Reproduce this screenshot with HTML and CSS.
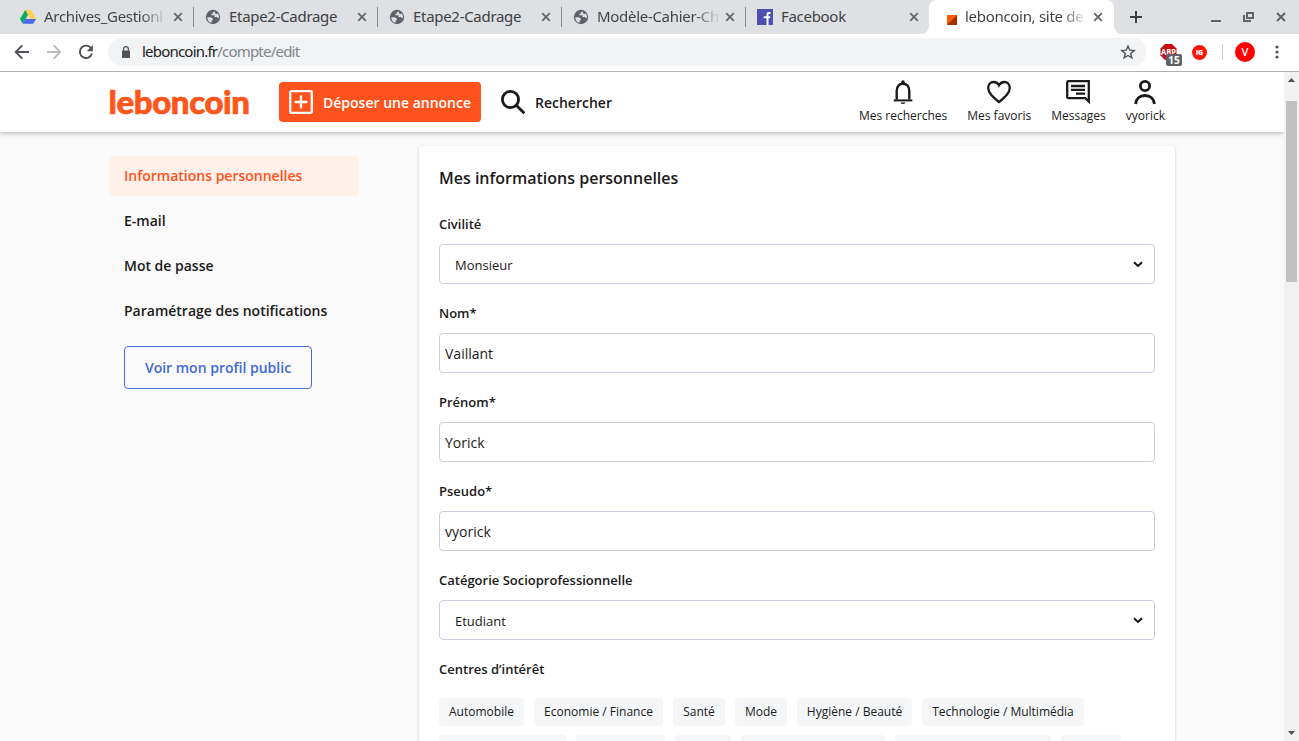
FILE: index.html
```html
<!DOCTYPE html>
<html lang="fr">
<head>
<meta charset="utf-8">
<title>leboncoin, site de petites annonces</title>
<link rel="stylesheet" href="styles.css">
</head>
<body>
<svg width="0" height="0" class="defs">
  <symbol id="close" viewBox="0 0 10 10"><path d="M1.200 1.200l7.600 7.600M8.800 1.200L1.200 8.800" stroke="#5f6368" stroke-width="1.700" fill="none"/></symbol>
  <symbol id="globe" viewBox="0 0 16 16"><circle cx="8" cy="8" r="7.200" fill="#5f6368"/><path d="M2.300 8.200H6l2 1.700v1.300H6.600v2.600C4 13.300 2.200 11 2.300 8.200zM9.200 2.300L8 3.300V4.500H6.500V6.200H9.500V8H12l1.600 1.700L14 7.300 12.800 4.300 11.300 5.200 10.200 4.300z" fill="#dee0e4"/></symbol>
  <symbol id="chevron" viewBox="0 0 10 7"><path d="M1 1.200l4 3.700 4-3.700" fill="none" stroke="#111" stroke-width="2"/></symbol>
</svg>
<div class="tabstrip">
  <div class="tab"><svg class="favicon" viewBox="0 0 16 16"><path d="M5.200 1h5.600L5.600 10 2.800 14.700 0 10z" fill="#11a861"/><path d="M5.200 1h5.600L16 10H10.400z" fill="#ffd04b"/><path d="M5.400 10H16l-2.800 4.700H2.700z" fill="#4a67f0"/></svg><span class="title fade">Archives_Gestionl</span><svg class="x"><use href="#close"/></svg></div>
  <div class="tab inner"><svg class="favicon"><use href="#globe"/></svg><span class="title">Etape2-Cadrage</span><svg class="x"><use href="#close"/></svg></div>
  <div class="tab inner"><svg class="favicon"><use href="#globe"/></svg><span class="title">Etape2-Cadrage</span><svg class="x"><use href="#close"/></svg></div>
  <div class="tab inner"><svg class="favicon"><use href="#globe"/></svg><span class="title fade">Modèle-Cahier-Ch</span><svg class="x"><use href="#close"/></svg></div>
  <div class="tab inner last"><svg class="favicon" viewBox="0 0 16 16"><path d="M0 0h16v16H0z" fill="#4b4fb0"/><path d="M13.500 3.900h-1.700q-1.300 0-1.300 1.300v10.800M6.700 8.300h6.500" stroke="#fff" stroke-width="2" fill="none"/></svg><span class="title">Facebook</span><svg class="x"><use href="#close"/></svg></div>
  <div class="tab active"><svg class="favicon" viewBox="0 0 16 16"><path d="M6 6h10v10H6z" fill="#ff5a0a"/><path d="M16 6v10H6z" fill="#a83000"/></svg><span class="title fade">leboncoin, site de</span><svg class="x"><use href="#close"/></svg></div>
  <div class="newtab"><svg width="12" height="12" viewBox="0 0 12 12"><path d="M6 0v12M0 6h12" stroke="#3c4043" stroke-width="2"/></svg></div>
  <div class="wincontrols">
    <svg width="10" height="10" viewBox="0 0 10 10"><path d="M0 9h10" stroke="#5f6368" stroke-width="2"/></svg>
    <svg width="11" height="10" viewBox="0 0 11 10"><path d="M4 1h6v5H4zM1 3v6h7" stroke="#5f6368" stroke-width="2" fill="none"/></svg>
    <svg width="10" height="10" viewBox="0 0 10 10"><path d="M1 1l8 8M9 1L1 9" stroke="#5f6368" stroke-width="2"/></svg>
  </div>
</div>
<div class="toolbar">
  <svg class="nav" viewBox="0 0 16 16"><path d="M15 8H2M8.300 1.300L1.700 8l6.600 6.700" stroke="#505357" stroke-width="1.900" fill="none"/></svg>
  <svg class="nav" viewBox="0 0 16 16"><path d="M1 8h13M7.700 1.300L14.300 8l-6.600 6.700" stroke="#babcbe" stroke-width="1.900" fill="none"/></svg>
  <svg class="nav" viewBox="0 0 16 16"><path d="M13.300 4.500A6.200 6.200 0 1 0 14 9.500" stroke="#505357" stroke-width="1.900" fill="none"/><path d="M14.900 1v6.200H8.700z" fill="#505357"/></svg>
  <div class="omnibox">
    <svg class="lock" viewBox="0 0 10 12"><path d="M1.500 4.500h7q.5 0 .5 1V11q0 1-.5 1h-7q-.5 0-.5-1V5.500q0-1 .5-1z" fill="#505357"/><path d="M2.700 5V3a2.300 2.300 0 0 1 4.600 0v2" stroke="#505357" stroke-width="1.300" fill="none"/></svg>
    <span class="url"><span class="host">leboncoin.fr</span><span>/compte/edit</span></span>
    <svg class="star" viewBox="0 0 16 16"><path d="M8 2l1.700 4.200 4.500.3-3.500 2.900 1.100 4.400L8 11.500l-3.800 2.300 1.100-4.400L1.800 6.500l4.500-.3z" fill="none" stroke="#505357" stroke-width="1.400"/></svg>
  </div>
  <div class="abp"><svg width="18" height="16" viewBox="0 0 18 16"><path d="M5 0h7l4.500 4.500v7L12 16H5L.5 11.500v-7z" fill="#c70d12"/><text x="1" y="10.500" textLength="15" lengthAdjust="spacingAndGlyphs">ABP</text></svg><span class="count">15</span></div>
  <span class="ig">IG</span>
  <span class="divider"></span>
  <span class="avatar">V</span>
  <svg class="dots" viewBox="0 0 4 14"><g fill="#505357"><circle cx="2" cy="2" r="1.600"/><circle cx="2" cy="7" r="1.600"/><circle cx="2" cy="12" r="1.600"/></g></svg>
</div>
<div class="viewport">
  <div class="page">
    <header class="header">
      <svg class="logo" width="140" height="40" viewBox="0 0 140 40"><text x="-.5" y="32" textLength="141.500">leboncoin</text></svg>
      <a class="post"><svg width="24" height="24" viewBox="0 0 24 24" fill="none" stroke="#fff" stroke-width="2.300"><rect x="1.200" y="1.200" width="21.600" height="21.600" rx="1"/><path d="M12 6.500v11M6.500 12h11" stroke-linecap="round"/></svg><span>Déposer une annonce</span></a>
      <a class="search"><svg width="24" height="24" viewBox="0 0 24 24" fill="none" stroke="#1a1a1a" stroke-width="2.800"><circle cx="9.500" cy="9.500" r="8.100"/><path d="M15.300 15.300l8 8"/></svg><span>Rechercher</span></a>
      <nav class="menu">
        <a><svg viewBox="0 0 24 24" fill="none" stroke="#1a1a1a" stroke-width="2.400"><path d="M5.700 19.500V11c0-4.600 2.600-7.200 6.300-7.200s6.300 2.600 6.300 7.200v8.500"/><path d="M2.700 20.400h18.600" stroke-width="2"/><path d="M10.200 3.500V2q0-1.800 1.800-1.800T13.800 2v1.500zM9.500 22.400h5q-.6 1.600-2.500 1.600t-2.500-1.600z" fill="#1a1a1a" stroke="none"/></svg><span>Mes recherches</span></a>
        <a><svg viewBox="0 0 24 24" fill="none" stroke="#1a1a1a" stroke-width="2.300"><path d="M12 22C6 17 1.200 13 1.200 8c0-4 2.500-6 5.500-6C9 2 11 3.300 12 5.300 13 3.300 15 2 17.300 2 20.300 2 22.800 4 22.800 8c0 5-4.800 9-10.800 14z"/></svg><span>Mes favoris</span></a>
        <a><svg viewBox="0 0 24 24" fill="none" stroke="#1a1a1a" stroke-width="2.300"><path d="M22.800 1.200V21.500l-3.500-3.300H2.500Q1.200 18.200 1.200 17V2.500Q1.200 1.200 2.500 1.200h20z"/><path d="M5 6h14M5 9.800h14M10 13.600h9"/></svg><span>Messages</span></a>
        <a><svg viewBox="0 0 24 24" fill="none" stroke="#1a1a1a" stroke-width="2.800"><circle cx="12" cy="6" r="4.600"/><path d="M2.600 24c.5-5.200 4-8.500 9.400-8.500s8.900 3.300 9.400 8.500"/></svg><span>vyorick</span></a>
      </nav>
    </header>
    <main class="content">
      <aside class="side">
        <a class="current">Informations personnelles</a>
        <a>E-mail</a>
        <a>Mot de passe</a>
        <a>Paramétrage des notifications</a>
        <a class="profile">Voir mon profil public</a>
      </aside>
      <section class="card">
        <h1>Mes informations personnelles</h1>
        <div class="field"><label>Civilité</label><div class="box select"><span>Monsieur</span><svg class="chev"><use href="#chevron"/></svg></div></div>
        <div class="field"><label>Nom*</label><div class="box">Vaillant</div></div>
        <div class="field"><label>Prénom*</label><div class="box">Yorick</div></div>
        <div class="field"><label>Pseudo*</label><div class="box">vyorick</div></div>
        <div class="field"><label>Catégorie Socioprofessionnelle</label><div class="box select"><span>Etudiant</span><svg class="chev"><use href="#chevron"/></svg></div></div>
        <div class="field"><label>Centres d’intérêt</label>
          <div class="chips"><span class="w1">Automobile</span><span class="w2">Economie / Finance</span><span class="w3">Santé</span><span class="w3">Mode</span><span class="w4">Hygiène / Beauté</span><span class="w5">Technologie / Multimédia</span></div>
          <div class="chips more"><span class="m1"></span><span class="m2"></span><span class="m3"></span><span class="m4"></span><span class="m5"></span><span class="m6"></span></div>
        </div>
      </section>
    </main>
  </div>
  <div class="scrollbar">
    <svg width="7" height="4" viewBox="0 0 7 4"><path d="M0 4L3.500 0 7 4z" fill="#505050"/></svg>
    <div class="thumb"></div>
    <svg width="7" height="4" viewBox="0 0 7 4"><path d="M0 0h7L3.500 4z" fill="#505050"/></svg>
  </div>
</div>
</body>
</html>
```
FILE: styles.css
```css
* { box-sizing: border-box; }
body { margin: 0; width: 1299px; height: 741px; overflow: hidden; display: flex; flex-direction: column; background: #fff; font-family: "Open Sans", sans-serif; color: #1a1a1a; }
.defs { position: absolute; }
svg { display: block; flex: none; }

.tabstrip { height: 34px; flex: none; display: flex; background: linear-gradient(#dee0e4, #dee0e4) 0 0 / 100% 24px no-repeat, #fff; }
.tab { width: 184px; height: 34px; flex: none; display: flex; align-items: center; padding: 0 11px; background: #dee0e4; }
.tab:first-child { width: 193px; padding-left: 20px; }
.tab.inner { padding-left: 12px; }
.tab.inner .x { margin-left: 4px; }
.tab.last { border-radius: 0 0 8px 0; }
.tab:not(.last):not(.active)::after { content: ""; width: 1px; height: 20px; background: #85888d; margin-left: 10px; margin-right: -12px; flex: none; position: relative; z-index: 1; }
.tab.active { width: 185px; padding-left: 12px; background: #fff; border-radius: 8px 8px 0 0; }
.tab.active .x { margin-left: 4px; }
.favicon { width: 16px; height: 16px; margin-right: 8px; }
.title { width: 124px; flex: none; margin-top: -2px; font: 15px "Noto Sans", "Open Sans", sans-serif; letter-spacing: -.3px; line-height: 20px; color: #3c4043; white-space: nowrap; }
.fade { background: linear-gradient(90deg, #3c4043 78%, rgba(60,64,67,.15) 96%); -webkit-background-clip: text; background-clip: text; color: transparent; }
.x { width: 10px; height: 10px; margin-left: 5px; }
.newtab { width: 38px; padding: 11px 0 0 16px; background: #dee0e4; border-radius: 0 0 0 8px; }
.wincontrols { flex: 1; justify-content: flex-end; background: #dee0e4; padding: 12px 13px 0 0; display: flex; gap: 22px; }

.toolbar { height: 38px; flex: none; display: flex; align-items: center; border-bottom: 1px solid #b0b1b1; padding: 0 0 1px 14px; background: #fff; }
.nav { width: 16px; height: 16px; margin-right: 16px; }
.omnibox { width: 1038px; height: 28px; margin-left: -2px; border-radius: 14px; background: #f1f3f4; display: flex; align-items: center; padding: 0 10px 0 13px; flex: none; }
.lock { width: 10px; height: 12px; }
.url { margin: -2px 0 0 11px; font: 15px "Noto Sans", "Open Sans", sans-serif; letter-spacing: -.79px; line-height: 20px; color: #80868b; }
.host { color: #202124; }
.star { width: 16px; height: 16px; margin-left: auto; }
.abp { position: relative; width: 18px; height: 16px; margin-left: 14px; flex: none; }
.abp text { font: bold 8px "Open Sans", sans-serif; fill: #fff; }
.count { position: absolute; left: 6px; top: 10px; width: 16px; height: 12px; border-radius: 2px; background: #5f6368; color: #fff; font: bold 10px/12px "Open Sans", sans-serif; text-align: center; }
.ig { width: 15px; height: 15px; margin-left: 14px; border-radius: 50%; background: #fb1408; color: #fff; font-size: 7px; font-weight: 800; line-height: 15px; text-align: center; flex: none; }
.divider { width: 1px; height: 16px; margin-left: 15px; background: #cfd1d3; flex: none; }
.avatar { width: 20px; height: 20px; margin-left: 12px; border-radius: 50%; background: #f00; color: #fff; font-size: 11px; font-weight: 600; line-height: 20px; text-align: center; flex: none; }
.dots { width: 4px; height: 14px; margin-left: 20px; }

.viewport { flex: 1; min-height: 0; display: flex; }
.page { width: 1284px; background: #fafafa; overflow: hidden; }
.header { position: relative; height: 60px; background: #fff; box-shadow: 0 1px 5px rgba(0,0,0,.3); display: flex; align-items: center; padding: 0 119px 0 109px; }
.logo { overflow: visible; }
.logo text { font: 900 33px Lato, sans-serif; fill: #ff561c; stroke: #ff561c; stroke-width: .7px; stroke-linejoin: round; }
.post { width: 202px; height: 40px; margin-left: 30px; border-radius: 4px; background: #ff521c; color: #fff; display: flex; align-items: center; gap: 10px; padding-left: 10px; font-size: 14px; font-weight: 600; white-space: nowrap; }
.search { display: flex; align-items: center; gap: 10px; margin-left: 20px; font-size: 14px; font-weight: 600; }
.menu { margin-left: auto; display: flex; gap: 20px; font-size: 12px; line-height: 16px; }
.menu a { display: flex; flex-direction: column; align-items: center; gap: 4px; }
.menu svg { width: 24px; height: 24px; overflow: visible; }

.content { display: flex; align-items: flex-start; padding-left: 109px; gap: 60px; }
.side { width: 250px; padding-top: 24px; display: flex; flex-direction: column; gap: 5px; align-items: flex-start; font-size: 14px; font-weight: 600; }
.side a { width: 250px; height: 40px; line-height: 40px; padding-left: 15px; border-radius: 4px; }
.side .current { background: #fff0e9; color: #ff521c; }
.side .profile { width: 188px; height: 43px; line-height: 41px; margin: 10px 0 0 15px; padding: 0; text-align: center; border: 1px solid #4a6fdc; color: #4069d8; }
.card { width: 756px; height: 640px; margin-top: 14px; padding: 20px 20px 0; background: #fff; border-radius: 4px; box-shadow: 0 1px 3px rgba(0,0,0,.2); }
h1 { margin: 0 0 24px; font-size: 16px; line-height: 24px; font-weight: 600; }
.field { height: 89px; }
.field label { display: block; font-size: 13px; font-weight: 600; line-height: 20px; margin-bottom: 10px; }
.box { height: 40px; border: 1px solid #c9cfda; border-radius: 4px; background: #fff; display: flex; align-items: center; justify-content: space-between; padding: 0 5px; font-size: 14px; }
.select { font-size: 13px; padding: 2px 11px 0 15px; }
.chev { width: 10px; height: 7px; margin-top: -1px; }
.chips { display: flex; gap: 10px; margin-top: 19px; }
.chips span { height: 28px; line-height: 28px; border-radius: 4px; background: #f4f6f8; font-size: 12px; text-align: center; white-space: nowrap; flex: none; }
.chips.more { margin-top: 9px; }
.w1 { width: 85px; } .w2 { width: 129px; } .w3 { width: 52px; } .w4 { width: 115px; } .w5 { width: 162px; }
.m1 { width: 127px; } .m2 { width: 89px; } .m3 { width: 56px; } .m4 { width: 144px; } .m5 { width: 156px; } .m6 { width: 60px; }

.scrollbar { width: 15px; background: #f1f1f1; display: flex; flex-direction: column; align-items: center; padding: 6px 0; }
.thumb { width: 11px; height: 181px; margin: 19px 0 auto; background: #c1c1c1; }
```
